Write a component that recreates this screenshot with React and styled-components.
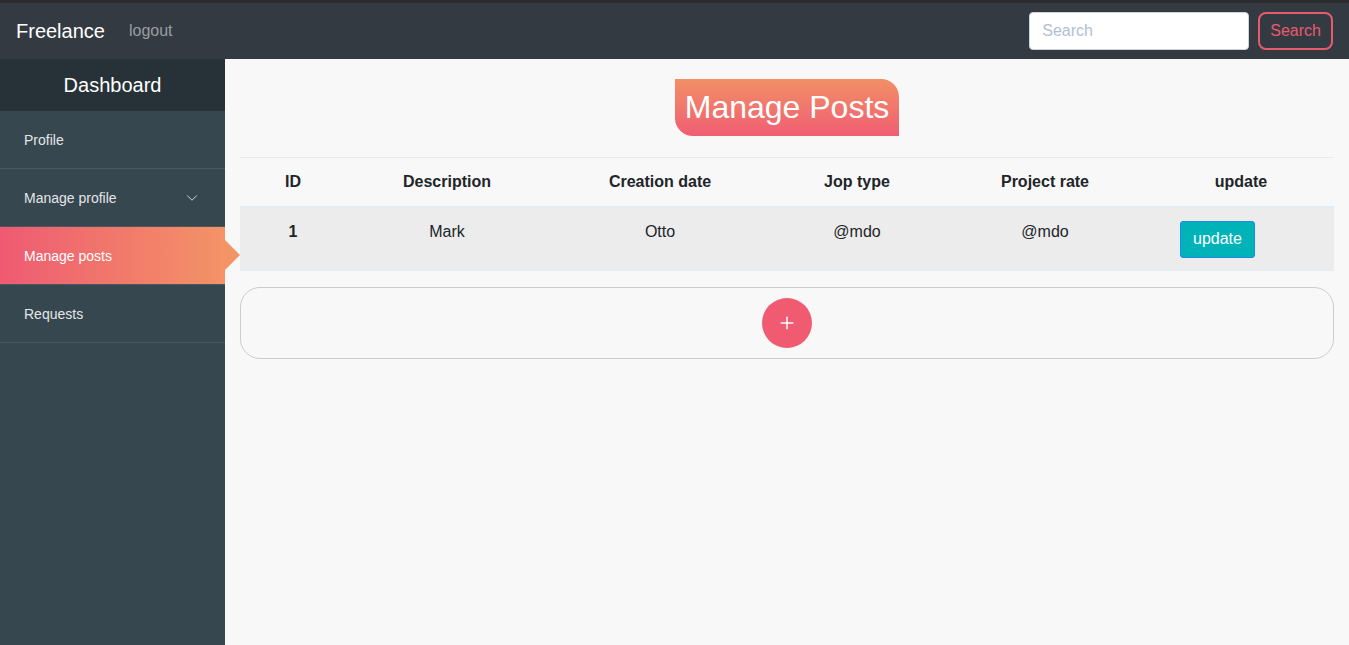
import React from 'react'
import styled, { createGlobalStyle } from 'styled-components'
import { ChevronDown, Plus } from 'lucide-react'

const GlobalStyle = createGlobalStyle`
    * { box-sizing: border-box; }
    html, body {
        margin: 0;
        padding: 0;
        height: 100%;
        background: #f8f8f8;
        font-family: "Liberation Sans", Arial, sans-serif;
    }
`

const Page = styled.div`
    height: 100vh;
    display: flex;
    flex-direction: column;
    overflow: hidden;
`

const Navbar = styled.nav`
    height: 59px;
    border-top: 3px solid #2a2c2f;
    background: #343a41;
    display: flex;
    align-items: center;
    padding: 0 16px;
    flex-shrink: 0;
`

const Brand = styled.span`
    color: #ffffff;
    font-size: 20px;
    margin-right: 24px;
`

const NavLink = styled.a`
    color: #9b9da0;
    font-size: 16px;
    flex: 1;
`

const SearchForm = styled.form`
    display: flex;
    align-items: center;
    gap: 9px;
`

const SearchInput = styled.input`
    width: 220px;
    height: 38px;
    border: 1px solid #ced4da;
    border-radius: 4px;
    padding: 0 12px;
    font-size: 16px;
    font-family: inherit;
    &::placeholder { color: #b2bdd6; }
`

const SearchButton = styled.button`
    height: 38px;
    padding: 0 10px;
    background: transparent;
    border: 2px solid #e85b6f;
    border-radius: 8px;
    color: #e85b6f;
    font-size: 16px;
    font-family: inherit;
`

const Body = styled.div`
    flex: 1;
    display: flex;
    min-height: 0;
`

const Sidebar = styled.aside`
    width: 225px;
    background: #37474f;
    flex-shrink: 0;
`

const SideHeader = styled.div`
    height: 52px;
    background: #263238;
    color: #ffffff;
    font-size: 20px;
    display: flex;
    align-items: center;
    justify-content: center;
`

const SideItem = styled.div`
    position: relative;
    height: 58px;
    display: flex;
    align-items: center;
    justify-content: space-between;
    padding: 0 24px;
    font-size: 14px;
    color: ${(props) => (props.active ? '#ffffff' : '#e3e6e8')};
    border-bottom: 1px solid #4a5960;
    background: ${(props) => (props.active ? 'linear-gradient(90deg, #ef5a72 0%, #f39466 100%)' : 'transparent')};
    &::after {
        content: '';
        display: ${(props) => (props.active ? 'block' : 'none')};
        position: absolute;
        right: -15px;
        top: 13px;
        border-top: 15px solid transparent;
        border-bottom: 15px solid transparent;
        border-left: 15px solid #f39466;
    }
`

const Main = styled.main`
    flex: 1;
    padding: 20px 15px;
    display: flex;
    flex-direction: column;
    align-items: center;
`

const Title = styled.h1`
    margin: 0 0 21px;
    padding: 0 10px;
    height: 57px;
    display: flex;
    align-items: center;
    font-size: 32px;
    font-weight: normal;
    color: #ffffff;
    background: linear-gradient(180deg, #f28f66 0%, #f05e73 100%);
    border-radius: 0 18px 0 18px;
`

const Table = styled.table`
    width: 100%;
    border-collapse: collapse;
    color: #212529;
    font-size: 16px;
`

const Th = styled.th`
    width: ${(props) => props.w}px;
    height: 49px;
    padding: 12px 12px 12px;
    text-align: center;
    font-weight: bold;
    border-top: 1px solid #e6ebf0;
    border-bottom: 2px solid #e3ecf5;
`

const Row = styled.tr`
    background: #ececec;
    border-bottom: 1px solid #e3ecf5;
`

const Td = styled.td`
    height: 63px;
    padding: 15px 12px 9px;
    text-align: center;
    vertical-align: top;
    font-weight: ${(props) => (props.bold ? 'bold' : 'normal')};
`

const ActionCell = styled.td`
    padding: 13px 12px 12px 32px;
    vertical-align: top;
`

const UpdateButton = styled.button`
    height: 37px;
    padding: 0 12px;
    background: #00b3b9;
    border: 1px solid #1e88e5;
    border-radius: 3px;
    color: #ffffff;
    font-size: 16px;
    font-family: inherit;
`

const AddBox = styled.div`
    width: 100%;
    margin-top: 16px;
    height: 72px;
    border: 1px solid #cccccc;
    border-radius: 20px;
    display: flex;
    align-items: center;
    justify-content: center;
`

const AddButton = styled.button`
    width: 50px;
    height: 50px;
    border-radius: 50%;
    border: none;
    background: #f05b72;
    color: #ffffff;
    display: flex;
    align-items: center;
    justify-content: center;
    padding: 0;
`

const columns = [
    { label: 'ID', w: 106 },
    { label: 'Description', w: 202 },
    { label: 'Creation date', w: 224 },
    { label: 'Jop type', w: 170 },
    { label: 'Project rate', w: 206 },
    { label: 'update', w: 186 },
]

const App = () => {
    return (
        <Page>
            <GlobalStyle />
            <Navbar>
                <Brand>Freelance</Brand>
                <NavLink>logout</NavLink>
                <SearchForm onSubmit={(e) => e.preventDefault()}>
                    <SearchInput placeholder="Search" />
                    <SearchButton type="submit">Search</SearchButton>
                </SearchForm>
            </Navbar>
            <Body>
                <Sidebar>
                    <SideHeader>Dashboard</SideHeader>
                    <SideItem>Profile</SideItem>
                    <SideItem>
                        Manage profile
                        <ChevronDown size={18} strokeWidth={1.3} color="#d5d9dc" />
                    </SideItem>
                    <SideItem active>Manage posts</SideItem>
                    <SideItem>Requests</SideItem>
                </Sidebar>
                <Main>
                    <Title>Manage Posts</Title>
                    <Table>
                        <thead>
                            <tr>
                                {columns.map((c) => (
                                    <Th key={c.label} w={c.w}>{c.label}</Th>
                                ))}
                            </tr>
                        </thead>
                        <tbody>
                            <Row>
                                <Td bold>1</Td>
                                <Td>Mark</Td>
                                <Td>Otto</Td>
                                <Td>@mdo</Td>
                                <Td>@mdo</Td>
                                <ActionCell>
                                    <UpdateButton>update</UpdateButton>
                                </ActionCell>
                            </Row>
                        </tbody>
                    </Table>
                    <AddBox>
                        <AddButton>
                            <Plus size={20} strokeWidth={1.8} />
                        </AddButton>
                    </AddBox>
                </Main>
            </Body>
        </Page>
    )
}

export default App
